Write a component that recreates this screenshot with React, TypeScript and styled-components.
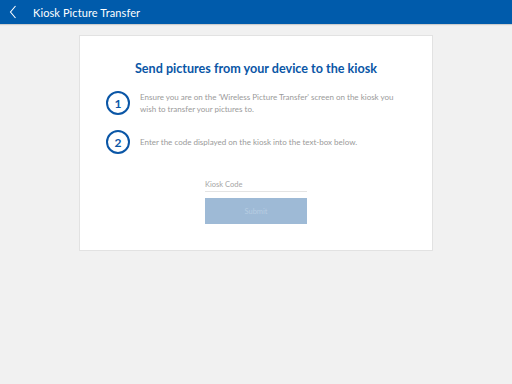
import styled, { createGlobalStyle } from "styled-components";

const GlobalStyle = createGlobalStyle`
    html, body {
        margin: 0;
        padding: 0;
        background: #f1f1f1;
        font-family: "Lato", "Open Sans", sans-serif;
    }
`;

const Page = styled.div`
    width: 512px;
    height: 384px;
    display: flex;
    flex-direction: column;
    background: #f1f1f1;
`;

const Header = styled.header`
    height: 24px;
    flex: 0 0 24px;
    background: #005bab;
    display: flex;
    align-items: center;
    padding-left: 8px;
    gap: 15px;
    color: #ffffff;
    box-shadow: 0 1px 1px rgba(0, 0, 0, 0.15);
`;

const BackButton = styled.div`
    width: 10px;
    height: 14px;
    display: flex;
    align-items: center;
    justify-content: center;
`;

const HeaderTitle = styled.h1`
    margin: 0;
    font-size: 11px;
    font-weight: 400;
    letter-spacing: 0.1px;
`;

const Body = styled.main`
    display: flex;
    justify-content: center;
    padding-top: 11px;
`;

const Card = styled.section`
    width: 354px;
    height: 216px;
    box-sizing: border-box;
    background: #ffffff;
    border: 1px solid #e2e2e2;
    padding: 25px 23px 0;
    display: flex;
    flex-direction: column;
`;

const CardTitle = styled.h2`
    margin: 0 0 15px;
    text-align: center;
    color: #0a56a6;
    font-size: 12.6px;
    font-weight: 700;
`;

const StepList = styled.ol`
    list-style: none;
    margin: 0;
    padding: 0 0 0 3px;
    display: flex;
    flex-direction: column;
    gap: 15px;
`;

const Step = styled.li`
    display: flex;
    align-items: center;
    gap: 10px;
`;

const StepNumber = styled.span`
    flex: 0 0 auto;
    width: 24px;
    height: 24px;
    box-sizing: border-box;
    border: 2px solid #0a56a6;
    border-radius: 50%;
    display: flex;
    align-items: center;
    justify-content: center;
    color: #0a56a6;
    font-size: 12px;
    font-weight: 700;
`;

const StepText = styled.p`
    margin: 0;
    max-width: 262px;
    color: #9a9a9a;
    font-size: 8px;
    line-height: 12px;
`;

const Form = styled.form`
    align-self: center;
    width: 102px;
    margin-top: 26px;
    display: flex;
    flex-direction: column;
    gap: 6px;
`;

const CodeInput = styled.input`
    width: 100%;
    box-sizing: border-box;
    border: none;
    border-bottom: 1px solid #e4e4e4;
    padding: 0 0 2px;
    font-family: inherit;
    font-size: 7.5px;
    color: #555;
    outline: none;

    &::placeholder {
        color: #a6a6a6;
    }
`;

const SubmitButton = styled.button`
    height: 26px;
    border: none;
    background: #9ebad6;
    color: #b7cde2;
    font-family: inherit;
    font-size: 7.5px;
`;

export default function App(): JSX.Element {
    return (
        <Page>
            <GlobalStyle />
            <Header>
                <BackButton>
                    <svg width="8" height="14" viewBox="0 0 8 14">
                        <path d="M6.5 1 L1.5 7 L6.5 13" fill="none" stroke="#ffffff" strokeWidth="1.1" />
                    </svg>
                </BackButton>
                <HeaderTitle>Kiosk Picture Transfer</HeaderTitle>
            </Header>
            <Body>
                <Card>
                    <CardTitle>Send pictures from your device to the kiosk</CardTitle>
                    <StepList>
                        <Step>
                            <StepNumber>1</StepNumber>
                            <StepText>
                                Ensure you are on the 'Wireless Picture Transfer' screen on the kiosk you
                                wish to transfer your pictures to.
                            </StepText>
                        </Step>
                        <Step>
                            <StepNumber>2</StepNumber>
                            <StepText>Enter the code displayed on the kiosk into the text-box below.</StepText>
                        </Step>
                    </StepList>
                    <Form onSubmit={(e) => e.preventDefault()}>
                        <CodeInput placeholder="Kiosk Code" />
                        <SubmitButton type="submit" disabled>
                            Submit
                        </SubmitButton>
                    </Form>
                </Card>
            </Body>
        </Page>
    );
}
